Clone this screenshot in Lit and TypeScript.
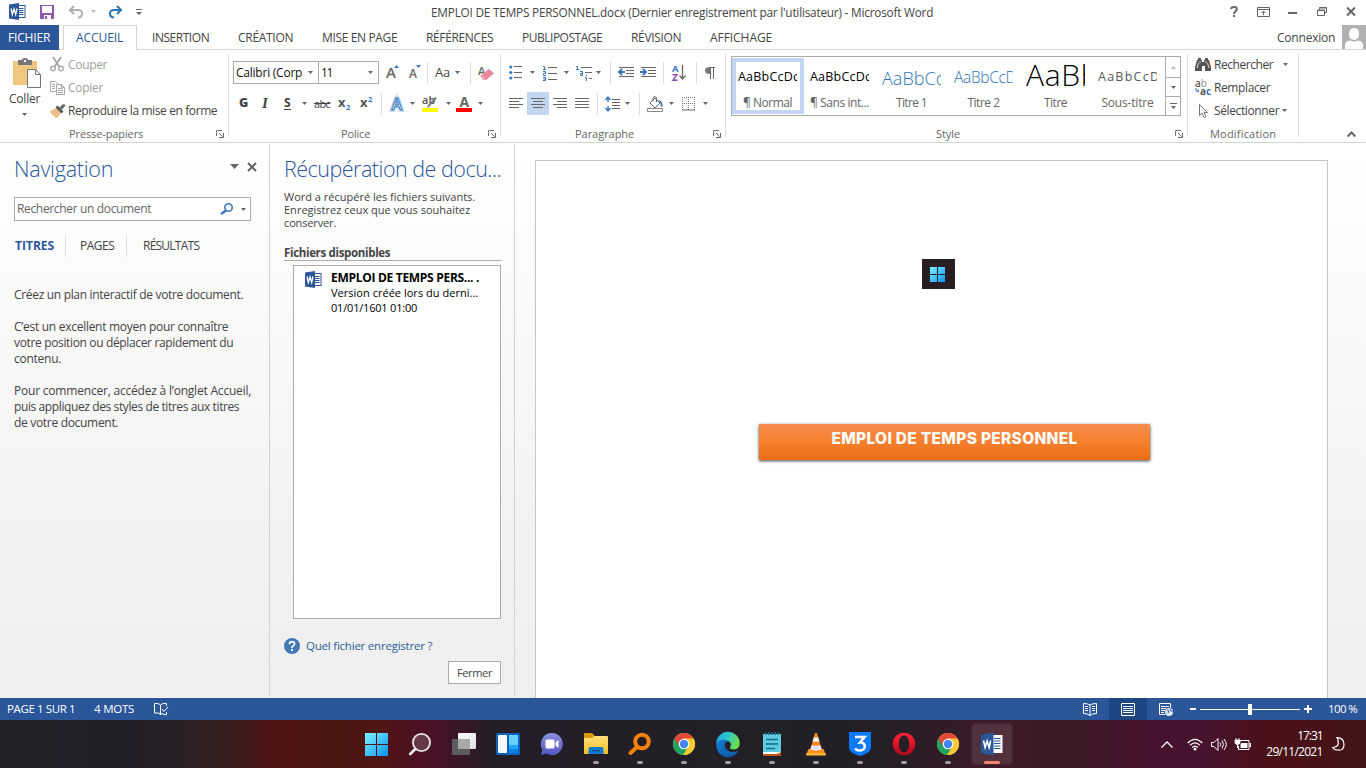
import { LitElement, html, svg, css, unsafeCSS } from "lit";
import { customElement } from "lit/decorators.js";

const FAMILY = '"Open Sans", "Noto Sans", sans-serif';

/* Grid tracks from the left edges of the items; the last number is the end of the row. */
const cols = (...x: number[]) =>
  unsafeCSS(x.slice(1).map((v, i) => `${v - x[i]}px`).join(" "));

const pen = document.createElement("canvas").getContext("2d")!;

/* A label whose tracking is computed so that it takes the given width. */
const t = (text: string, width: number, size = 12, weight = 400, cls = "", family = FAMILY) => {
  pen.font = `${weight} ${size}px ${family}`;
  const spacing = (width + 0.2 - pen.measureText(text).width) / text.length;
  return html`<span class="t ${cls}" style="font-size:${size}px;font-weight:${weight};letter-spacing:${spacing.toFixed(3)}px">${text}</span>`;
};

const ic = (w: number, h: number, body: unknown, cls = "") =>
  html`<svg class="ic ${cls}" width=${w} height=${h} viewBox="0 0 ${w} ${h}" fill="none">${body}</svg>`;

const arrow = () => ic(5, 3, svg`<path d="M0 0h5L2.500 3z" fill="#666"/>`);
const sep = () => html`<i class="sep"></i>`;
const launcher = () =>
  ic(8, 8, svg`<path d="M.5 6V.5H6" stroke="#777"/><path d="M3 3l3.500 3.500M7.500 3v4.500H3" stroke="#666"/>`, "launcher");
const wordIcon = () =>
  ic(17, 17, svg`<rect x="8.500" y="2.500" width="7.500" height="12" fill="#fff" stroke="#2b579a"/>
    <path d="M10 5.500h4.500M10 7.500h4.500M10 9.500h4.500M10 11.500h4.500" stroke="#2b579a"/>
    <path d="M0 1.500L10 0v17L0 15.500z" fill="#2b579a"/>
    <path d="M2 5.500l1.300 6 1.700-5.500 1.700 5.500 1.300-6" stroke="#fff" stroke-width="1.300"/>`);
const binoculars = () =>
  ic(16, 14, svg`<path d="M3 0h3v2h1v2h2V2h1V0h3v2h1l2 7v4h-6V8H7v5H0V9l2-7h1z" fill="#555"/>
    <path d="M3.500 5L2 10M12.500 5l1.500 5M5 3v2M11 3v2" stroke="#ddd"/>`);
const winLogo = (s: number) =>
  ic(s, s, svg`<defs><linearGradient id="w${s}" x1="0" y1="0" x2="${s}" y2="${s}" gradientUnits="userSpaceOnUse"><stop stop-color="#7df3ff"/><stop offset="1" stop-color="#0a93fb"/></linearGradient></defs>
    <path d="M0 0h${(s - 1) / 2}v${(s - 1) / 2}H0zM${(s + 1) / 2} 0H${s}v${(s - 1) / 2}H${(s + 1) / 2}zM0 ${(s + 1) / 2}h${(s - 1) / 2}V${s}H0zM${(s + 1) / 2} ${(s + 1) / 2}H${s}V${s}H${(s + 1) / 2}z" fill="url(#w${s})"/>`);
const lines = (rows: [number, number][], w = 14) =>
  ic(w, 13, svg`${rows.map(([x, l], i) => svg`<path d="M${x} ${i * 3 + 1.5}h${l}" stroke="#666"/>`)}`);

const chrome = () =>
  ic(24, 24, svg`<circle cx="12" cy="12" r="11" fill="#fcc934"/>
    <path d="M12 12L2.500 6.500A11 11 0 0 0 11 23l5.500-8.500z" fill="#1ea362"/>
    <path d="M2.500 6.500A11 11 0 0 1 21.500 6.500H12L7.300 14.500z" fill="#e1483c"/>
    <path d="M12 6.700h9.700A11 11 0 0 1 11.500 23l5-8z" fill="#fcc934"/>
    <circle cx="12" cy="12" r="5.300" fill="#fff"/><circle cx="12" cy="12" r="4.200" fill="#4386f5"/>`);

const TASKS: { icon: () => unknown; run?: boolean; active?: boolean }[] = [
  { icon: () => winLogo(23) },
  {
    icon: () => ic(24, 24, svg`<circle cx="13.500" cy="10.500" r="8.600" fill="#67384a" stroke="#e9e6e8" stroke-width="1.800"/><path d="M7.300 17L2.200 22" stroke="#e9e6e8" stroke-width="2.800" stroke-linecap="round"/>`),
  },
  {
    icon: () => ic(24, 24, svg`<defs><linearGradient id="tv" x2="1" y2="1"><stop stop-color="#fff"/><stop offset="1" stop-color="#dedede"/></linearGradient></defs>
      <rect y="7" width="18" height="16" rx="1" fill="#5d5b5d"/><rect x="6" y="1" width="18" height="16" rx="1" fill="url(#tv)"/><path d="M6 7h12v10H7a1 1 0 0 1-1-1z" fill="#a9a9a9"/>`),
  },
  {
    icon: () => ic(24, 24, svg`<rect y="1" width="24" height="22" rx="1.500" fill="#0d64b8"/><rect x="2" y="3" width="9" height="18" rx="1" fill="#f6f8fa"/><path d="M13 3h9v10h-9z" fill="#66d4ff"/><path d="M13 13h9v4h-9z" fill="#22a4f5"/><path d="M13 17h9v4h-9z" fill="#0a84e4"/>`),
  },
  {
    icon: () => ic(24, 24, svg`<defs><linearGradient id="tm" x2="0" y2="1"><stop stop-color="#8b8fdc"/><stop offset="1" stop-color="#5558c4"/></linearGradient></defs>
      <path d="M12 1a11 11 0 1 1-5.500 20.600L1 23l1.300-5.500A11 11 0 0 1 12 1z" fill="url(#tm)"/><rect x="5.500" y="7.500" width="9" height="9" rx="1.500" fill="#fff"/><path d="M15.500 10.500l3-2.500v8l-3-2.500z" fill="#fff"/>`),
  },
  {
    run: true,
    icon: () => ic(24, 24, svg`<defs><linearGradient id="fo" x2="0" y2="1"><stop stop-color="#ffe07a"/><stop offset="1" stop-color="#f9bf25"/></linearGradient></defs>
      <path d="M0 2a1 1 0 0 1 1-1h7l3 3v4H0z" fill="#d79a0a"/><path d="M0 6h8l2.500-2H23a1 1 0 0 1 1 1v17H0z" fill="url(#fo)"/><path d="M4.500 22v-5a2 2 0 0 1 2-2h11a2 2 0 0 1 2 2v5z" fill="#1279cf"/><path d="M8 18h8v1.500H8z" fill="#0b559b"/>`),
  },
  {
    run: true,
    icon: () => ic(24, 24, svg`<circle cx="14" cy="9.500" r="6.800" stroke="#f98108" stroke-width="4"/><path d="M9 15l-6.500 6" stroke="#f98108" stroke-width="4" stroke-linecap="round"/>`),
  },
  { run: true, icon: chrome },
  {
    run: true,
    icon: () => ic(24, 24, svg`<defs><linearGradient id="e1" x2="1" y2=".3"><stop stop-color="#1f9fdc"/><stop offset=".5" stop-color="#2cc4d2"/><stop offset="1" stop-color="#69df4f"/></linearGradient><linearGradient id="e2" x2="1" y2="1"><stop stop-color="#1580d8"/><stop offset="1" stop-color="#0c4a9c"/></linearGradient></defs>
      <path d="M.3 12A11.700 11.700 0 0 1 23.700 11c.3 4.500-3 6.500-6.200 6.500-3 0-4.200-1.200-3.200-2.700 1.800-2.800-.3-6-4.300-6.300C5.500 8 1.500 9.500.3 12z" fill="url(#e1)"/>
      <path d="M.4 11.500C2.500 7 9 6.500 12.500 9.500 9 9.500 8 12.500 9 15.500c1.800 4.500 8 6 12 3.700.8-.4 1.200.2.700.8A11.700 11.700 0 0 1 .4 11.500z" fill="url(#e2)"/>
      <path d="M8.500 12.500c.5 5 5 8 9.500 7.700 1.500-.1 2.500-.5 3.200-.9.600-.3 1 .2.500.7a11.700 11.700 0 0 1-7 3.700C9 22.500 6.500 17 8.500 12.500z" fill="#1565b3"/>`),
  },
  {
    run: true,
    icon: () => ic(24, 24, svg`<path d="M3 2h18v19H3z" fill="#5fcbe0"/><path d="M5.500 0v3M8.800 0v3M12 0v3M15.200 0v3M18.500 0v3" stroke="#236f86" stroke-width="1.500"/><path d="M6 7.500h12M6 12h12M6 16.500h9" stroke="#176a85" stroke-width="1.600"/><path d="M3 20h18v2H3z" fill="#fff"/><path d="M3 22h14l4-2v4H3z" fill="#b85a1c"/>`),
  },
  {
    run: true,
    icon: () => ic(24, 24, svg`<path d="M4.500 17h15l2.500 6H2z" fill="#f59a16"/><path d="M2.500 21.500h19l.5 2H2z" fill="#ffbd37"/><path d="M11 1h2l5 17.500c-2 2-10 2-12 0z" fill="#f7811a"/><path d="M9.700 5.500h4.600l1.200 4.200H8.500z" fill="#efefef"/><path d="M7.400 13.500h9.200l1.200 4c-2 1.500-9.700 1.500-11.600 0z" fill="#e4e4e4"/>`),
  },
  {
    run: true,
    icon: () => ic(24, 24, svg`<path d="M1 0h22v15c0 5-5 7-11 9C6 22 1 20 1 15z" fill="#0a7bff"/><path d="M7 5h9.500L12 10.500c6-.5 6.500 7.500.5 8-2.500.2-4.500-.8-5.500-2" stroke="#fff" stroke-width="2.600"/>`),
  },
  {
    run: true,
    icon: () => ic(24, 24, svg`<defs><linearGradient id="op" x2="0" y2="1"><stop stop-color="#ff2338"/><stop offset="1" stop-color="#b3071b"/></linearGradient></defs>
      <path fill-rule="evenodd" d="M12 .8a11.200 11.200 0 1 0 0 22.400A11.200 11.200 0 0 0 12 .8zm0 2.800c3.500 0 5.200 4 5.200 8.400s-1.700 8.400-5.200 8.400S6.800 16.400 6.800 12 8.500 3.600 12 3.600z" fill="url(#op)"/>`),
  },
  { run: true, icon: chrome },
  {
    run: true,
    active: true,
    icon: () => ic(24, 24, svg`<rect x="12" y="3" width="10.500" height="18" fill="#fff"/><path d="M14 6.500h6.500M14 9h6.500M14 11.500h6.500M14 14h6.500M14 16.500h6.500" stroke="#2b579a"/><path d="M1 3l12.500-2.500v23L1 21z" fill="#2b579a"/><path d="M3.500 8.500l1.600 7 2-6.500 2 6.500 1.600-7" stroke="#fff" stroke-width="1.600"/>`),
  },
];

@customElement("app-root")
export class AppRoot extends LitElement {
  static styles = css`
    :host { display: block; width: 1366px; height: 768px; overflow: hidden; font-family: ${unsafeCSS(FAMILY)}; color: #444; background: #fff; }
    * { box-sizing: border-box; }
    .app { display: grid; grid-template-rows: 25px 25px 93px 555px 22px 48px; height: 768px; }
    .t { white-space: pre; line-height: 1; display: block; }
    .ic { display: block; overflow: visible; flex: none; }
    .row { display: grid; align-items: center; justify-items: start; }
    .sep { width: 1px; height: 22px; background: #dcdcdc; }
    .title { grid-template-columns: ${cols(0, 9, 40, 68, 91, 108, 136, 431, 1230, 1257, 1288, 1317, 1346, 1366)}; height: 23px; }
    .title > :first-child { grid-column: 2; }
    .title > .t { margin-top: 2px; }
    .tabs { grid-template-columns: ${cols(0, 63, 152, 238, 322, 426, 522, 631, 710, 1277, 1342, 1366)}; background: linear-gradient(#d4d4d4, #d4d4d4) 0 24px / 100% 1px no-repeat; }
    .file { background: #2b579a; color: #fff; width: 59px; height: 25px; padding-left: 8px; display: flex; align-items: center; }
    .tab-on { border: 1px solid #d4d4d4; border-bottom: 0; background: #fff; color: #2b579a; width: 74px; height: 25px; padding-left: 12px; display: flex; align-items: center; }
    .avatar { align-self: start; }

    .ribbon { display: grid; grid-template-columns: ${cols(0, 229, 501, 726, 1188, 1299, 1366)}; border-bottom: 1px solid #d4d4d4; }
    .group { display: grid; grid-template-rows: 11px 23px 8px 23px 11px 15px; background: linear-gradient(#dcdcdc, #dcdcdc) 100% 4px / 1px 83px no-repeat; }
    .group > * { min-width: 0; }
    .r1 { grid-row: 2; } .r2 { grid-row: 4; } .r3 { grid-row: 6; }
    .caption { color: #666; }
    .launcher { margin-top: 1px; margin-left: -1px; }
    .clip { grid-row: 1 / 6; display: grid; grid-template-columns: 50px 1fr; }
    .paste { display: flex; flex-direction: column; padding: 8px 0 0 9px; gap: 5px; }
    .paste svg:first-child { margin-left: 4px; }
    .paste svg:last-child { margin-left: 13px; margin-top: 3px; }
    .stack { display: grid; grid-template-rows: repeat(3, 23px); padding-top: 3px; }
    .stack > div { display: grid; grid-template-columns: 18px auto 1fr; align-items: center; }
    .off { color: #a0a0a0; }
    .cap-clip { grid-template-columns: ${cols(0, 69, 217, 229)}; }
    .cap-clip > :first-child, .cap-font > :first-child, .cap-par > :first-child, .cap-style > :first-child, .cap-mod > :first-child { grid-column: 2; }
    .font1 { grid-template-columns: ${cols(229, 233, 318, 386, 409, 427, 435, 455, 470, 478, 501)}; }
    .font1 > :first-child { grid-column: 2; }
    .box { height: 23px; border: 1px solid #ababab; display: flex; align-items: center; justify-content: space-between; padding: 0 5px 0 2px; color: #111; background: #fff; }
    .bx1 { width: 85px; border-right: 0; } .bx2 { width: 61px; }
    .font2 { grid-template-columns: ${cols(229, 239, 262, 284, 302, 314, 338, 360, 381, 390, 410, 422, 446, 456, 478, 501)}; }
    .font2 > :first-child { grid-column: 2; }
    .u { border-bottom: 1px solid #444; } .it { font-style: italic; font-family: "Liberation Serif", serif; }
    .strike { text-decoration: line-through; }
    .cap-font { grid-template-columns: ${cols(229, 341, 489, 501)}; }
    .par1 { grid-template-columns: ${cols(501, 509, 530, 543, 564, 576, 596, 610, 618, 640, 663, 672, 696, 705, 726)}; }
    .par2 { grid-template-columns: ${cols(501, 509, 527, 553, 575, 597, 605, 625, 639, 647, 669, 682, 703, 726)}; }
    .par1 > :first-child, .par2 > :first-child { grid-column: 2; }
    .on { width: 22px; height: 23px; background: #c2d5f2; display: grid; place-items: center; }
    .cap-par { grid-template-columns: ${cols(501, 575, 714, 726)}; }
    .cap-style { grid-template-columns: ${cols(726, 936, 1176, 1188)}; }
    .gallery { grid-row: 1 / 5; margin: 6px 0 0 5px; width: 450px; height: 60px; border: 1px solid #ababab; display: grid; grid-template-columns: repeat(6, 72px) 16px; }
    .style { display: grid; grid-template-rows: 31px 20px; padding: 5px 0 0 6px; overflow: hidden; }
    .style.sel { margin-top: 1px; height: 56px; border: 4px solid #c2d5f2; padding: 0 0 0 2px; }
    .sample { width: 59px; overflow: hidden; display: flex; align-items: center; color: #000; }
    .style > .t { justify-self: center; align-self: center; margin-left: -7px; color: #666; }
    .style.sel > .t { margin-left: -3px; }
    .sample.blue { color: #2e74b5; } .sample.gray { color: #5a5a5a; }
    .sample.tall { margin-bottom: 6px; }
    .scroll { display: grid; grid-template-rows: 20px 19px 19px; border-left: 1px solid #ababab; margin-left: 1px; }
    .scroll > div { display: grid; place-items: center; } .scroll > div + div { border-top: 1px solid #ababab; }
    .mod { grid-row: 1 / 6; padding: 3px 0 0 7px; }
    .mod > div { grid-template-columns: 19px auto 1fr; }
    .mod > div > svg:last-child { margin-left: 10px; } .mod > div:last-child > svg:last-child { margin-left: 3px; }
    .cap-mod { grid-template-columns: ${cols(1188, 1210, 1299)}; }
    .fold { display: flex; padding: 81px 0 0 48px; }

    .body { display: grid; grid-template-columns: 270px 245px 851px; background: linear-gradient(#fff, #fdfdfd 10%, #f1f1f1 75%, #efefef); }
    .pane { background: linear-gradient(#d4d4d4, #d4d4d4) 100% 2px / 1px 551px no-repeat; padding: 13px 0 0 14px; }
    .h { color: #2b579a; height: 26px; display: grid; align-items: center; }
    .nav-h { grid-template-columns: 216px 17px 1fr; }
    .nav-h svg { margin-top: -5px; }
    .search { width: 237px; height: 24px; border: 1px solid #ababab; background: #fff; margin-top: 15px; display: grid; grid-template-columns: 203px 21px 1fr; align-items: center; padding-left: 2px; color: #666; }
    .navtabs { grid-template-columns: ${cols(15, 65, 80, 126, 143, 240)}; height: 20px; margin-top: 14px; padding-left: 1px; }
    .sel-t { color: #2b579a; }
    .para { display: grid; grid-auto-rows: 16px; align-items: center; margin-top: 16px; }
    .navtabs + .para { margin-top: 32px; }
    .small { display: grid; grid-auto-rows: 13px; margin-top: 8px; align-items: center; }
    .sect { margin-top: 16px; width: 217px; height: 16px; border-bottom: 1px solid #ababab; display: flex; align-items: center; }
    .list { margin: 4px 0 0 9px; width: 208px; height: 354px; border: 1px solid #ababab; background: #fff; display: grid; grid-template-columns: 26px 1fr; padding: 5px 0 0 11px; color: #000; align-items: start; }
    .list > div { display: grid; grid-auto-rows: 14.600px; align-items: center; }
    .help { display: grid; grid-template-columns: 22px 1fr; align-items: center; margin-top: 19px; height: 16px; color: #2b6198; }
    .btn { margin: 7px 0 0 164px; width: 53px; height: 23px; border: 1px solid #ababab; background: #fff; display: grid; place-items: center; }
    .doc { padding: 17px 0 0 20px; }
    .page { width: 793px; height: 538px; border: 1px solid #c6c6c6; border-bottom: 0; background: #fff; }
    .pic { margin: 98px 0 0 386px; width: 33px; height: 30px; background: #281e22; display: grid; place-items: center; }
    .pic svg { margin-right: 2px; }
    .banner { margin: 135px 0 0 223px; width: 391px; height: 36px; background: linear-gradient(#f28c4e, #f6812f 45%, #e86c13); box-shadow: 0 1px 3px rgba(0, 0, 0, .75); color: #fff; display: flex; justify-content: center; padding-top: 7px; }
    .mont { font-family: Inter, sans-serif; }

    .status { background: #2b579a; color: #fff; grid-template-columns: ${cols(0, 7, 94, 154, 1083, 1109, 1159, 1190, 1200, 1304, 1328, 1366)}; }
    .status > :first-child { grid-column: 2; }
    .view-on { background: #1c4784; width: 38px; height: 22px; display: grid; place-items: center; }

    .taskbar { color: #fff; display: grid; grid-template-columns: 353.500px 660px 1fr; background: linear-gradient(90deg, #242027 0, #201f28 9%, #2a1f25 13%, #33201f 16%, #4d1212 20%, #481710 25%, #501414 28%, #471129 32%, #231e27 36%, #222026 62%, #2b1c25 68%, #401a2a 73%, #3b1924 78%, #46112f 84%, #461230 88%, #4b1116 93%, #421418 100%); }
    .tasks { display: grid; grid-template-columns: repeat(15, 44px); }
    .task { width: 40px; height: 40px; margin: 4px 0 0 2.500px; border-radius: 4px; display: grid; grid-template-rows: 36px 4px; justify-items: center; align-items: center; }
    .task.active { background: rgba(255, 255, 255, .1); outline: 1px solid rgba(255, 255, 255, .05); }
    .task .ic { margin-top: 4px; }
    .dot { width: 6px; height: 3px; border-radius: 2px; background: #a09da1; }
    .active .dot { width: 16px; background: #f5846c; }
    .tray { grid-template-columns: ${cols(1014, 1161, 1187, 1211, 1235, 1260, 1332, 1366)}; }
    .tray > :first-child { grid-column: 2; }
    .clock { display: grid; grid-auto-rows: 16px; justify-items: end; align-items: center; width: 63px; }
  `;

  titleBar() {
    return html`<div class="row title">
      ${wordIcon()}
      ${ic(14, 14, svg`<path d="M0 0h14v14H0z" fill="#8a5bb0"/><path d="M2 1h10v7H2zM4 10h7v4H4z" fill="#fff"/><path d="M5 11h2v3H5z" fill="#8a5bb0"/>`)}
      ${ic(16, 14, svg`<path d="M6 1L2 5l4 4M2.500 5H10c6 0 5 7 0 7.500" stroke="#b0b0b0" stroke-width="2"/>`)}
      ${ic(5, 3, svg`<path d="M0 0h5L2.500 3z" fill="#bbb"/>`)}
      ${ic(16, 14, svg`<path d="M9 1l4 4-4 4M12.500 5H6c-6 0-5 7 0 7.500" stroke="#2f75b5" stroke-width="2"/>`)}
      ${ic(6, 6, svg`<path d="M0 .5h6" stroke="#666"/><path d="M0 3h6L3 6z" fill="#666"/>`)}
      ${t("EMPLOI DE TEMPS PERSONNEL.docx (Dernier enregistrement par l'utilisateur) - Microsoft Word", 502, 11.8)}
      ${ic(8, 11, svg`<path d="M1 3Q1.200 1 4 1T6.800 3.200Q6.800 4.500 5.500 5.300T4 8" stroke="#666" stroke-width="2"/><path d="M3 9h2v2H3z" fill="#666"/>`)}
      ${ic(13, 10, svg`<path d="M.5.5h12v9H.5zM.5 2.500h12M6.500 8V4M4.500 6l2-2 2 2" stroke="#666"/>`)}
      ${ic(9, 6, svg`<path d="M0 4h9" stroke="#666" stroke-width="2"/>`)}
      ${ic(10, 9, svg`<path d="M2.500 2.500v-2h7v5h-2M.5 3h7v5.500h-7z" stroke="#666"/><path d="M2 1h8M0 3.500h8" stroke="#666"/>`)}
      ${ic(10, 9, svg`<path d="M1 .5l8 8M9 .5l-8 8" stroke="#666" stroke-width="2"/>`)}
    </div>`;
  }

  tabs() {
    return html`<div class="row tabs">
      <div class="file">${t("FICHIER", 42)}</div>
      <div class="tab-on">${t("ACCUEIL", 47)}</div>
      ${t("INSERTION", 57)} ${t("CRÉATION", 55)} ${t("MISE EN PAGE", 75)} ${t("RÉFÉRENCES", 67)}
      ${t("PUBLIPOSTAGE", 80)} ${t("RÉVISION", 50)} ${t("AFFICHAGE", 62)} ${t("Connexion", 58)}
      ${ic(24, 24, svg`<path d="M0 0h24v24H0z" fill="#b1b1b1"/><rect x="7" y="3" width="10" height="12" rx="5" fill="#fff"/><path d="M3 24v-4q0-4 5-4.500 4 2 8 0 5 .5 5 4.500v4z" fill="#fff"/>`, "avatar")}
    </div>`;
  }

  clipboard() {
    return html`<div class="group">
      <div class="clip">
        <div class="paste">
          ${ic(28, 30, svg`<path d="M0 3h24v24H0z" fill="#edc87e"/><path d="M5 2h4q0-2 3-2t3 2h4v5H5z" fill="#777"/><path d="M11 2h2v2h-2z" fill="#fff"/><path d="M14.500 11.500h8l5 5v13h-13z" fill="#fff" stroke="#777"/><path d="M22.500 11.500v5h5" stroke="#777"/>`)}
          ${t("Coller", 31, 12)} ${arrow()}
        </div>
        <div class="stack">
          <div class="off">${ic(14, 15, svg`<path d="M3 0l6.500 10M11 0L4.500 10" stroke="#a5a5a5" stroke-width="1.800"/><circle cx="3" cy="11.500" r="2.300" stroke="#a5a5a5" stroke-width="1.300"/><circle cx="11" cy="11.500" r="2.300" stroke="#a5a5a5" stroke-width="1.300"/>`)}${t("Couper", 39)}</div>
          <div class="off">${ic(15, 14, svg`<path d="M6 10.500H.5V.5h5l3 3" stroke="#a8a8a8"/><path d="M2 3.500h3M2 5.500h3M2 7.500h3" stroke="#a8a8a8"/><path d="M6.500 3.500h5l3 3v7h-8z" fill="#fff" stroke="#a5a5a5"/><path d="M8 7.500h5M8 9.500h5M8 11.500h5M11.500 3.500v3h3" stroke="#a8a8a8"/>`)}${t("Copier", 35)}</div>
          <div>${ic(16, 14, svg`<path d="M0 7l6-3 5 5-4 5q-2 0-3-2-3-1-4-5z" fill="#edc087"/><path d="M5.500 3.500l2-2 6 6-2 2z" fill="#555"/><path d="M9 4l3.500-3.500q2-1 3 1L12 5.500z" fill="#666"/>`)}${t("Reproduire la mise en forme", 149)}</div>
        </div>
      </div>
      <div class="row r3 cap-clip caption">${t("Presse-papiers", 74, 11)}${launcher()}</div>
    </div>`;
  }

  font() {
    const bigA = (d: string, s: number) => html`${ic(13, 14, svg`<text x="0" y="12" font-size=${s} font-weight="600" fill="#666">A</text><path d=${d} fill="#3a78bd"/>`)}`;
    return html`<div class="group">
      <div class="row r1 font1">
        <div class="box bx1">${t("Calibri (Corp", 66, 12)}${arrow()}</div>
        <div class="box bx2">${t("11", 11, 12)}${arrow()}</div>
        ${bigA("M8 2h5L10.500 -1z", 15)} ${bigA("M7 -1h5L9.500 2z", 12)} ${sep()}
        ${t("Aa", 15, 13)} ${arrow()} ${sep()}
        ${ic(16, 14, svg`<text x="0" y="9" font-size="11" font-weight="600" fill="#666">A</text><path d="M2 10l7-6 1.500 7.500L8 14H5z" fill="#f2a4b2"/><path d="M4 9l7-6 5 4.500-8 6.500z" fill="#e8899b"/>`)}
      </div>
      <div class="row r2 font2">
        ${t("G", 8, 12.5, 800)} ${t("I", 6, 15, 700, "it")} ${t("S", 7, 12, 700, "u")} ${arrow()}
        ${t("abc", 16, 11, 400, "strike")}
        ${ic(13, 14, svg`<text x="0" y="10" font-size="13" font-weight="700" fill="#555">x</text><text x="8" y="13" font-size="7.500" font-weight="700" fill="#3a78bd">2</text>`)}
        ${ic(13, 14, svg`<text x="0" y="10" font-size="13" font-weight="700" fill="#555">x</text><text x="8" y="5" font-size="7.500" font-weight="700" fill="#3a78bd">2</text>`)}
        ${sep()}
        ${ic(14, 14, svg`<text x="1.500" y="12.500" font-size="16" font-weight="600" fill="#fff" stroke="#c3daf2" stroke-width="3.500">A</text><text x="1.500" y="12.500" font-size="16" font-weight="600" fill="#fff" stroke="#3a78bd">A</text>`)}
        ${arrow()}
        ${ic(16, 16, svg`<text x="0" y="8" font-size="11" font-weight="600" fill="#555">ab</text><path d="M15 2l-8 9-2 1 1-3 7-8z" fill="#777"/><path d="M0 12h16v4H0z" fill="#ff0"/>`)}
        ${arrow()}
        ${ic(16, 16, svg`<text x="3.500" y="11" font-size="14" font-weight="700" fill="#666">A</text><path d="M0 12h16v4H0z" fill="red"/>`)}
        ${arrow()}
      </div>
      <div class="row r3 cap-font caption">${t("Police", 29, 11)}${launcher()}</div>
    </div>`;
  }

  paragraph() {
    const arrowCol = "#3a78bd";
    const dots = svg`${[2, 7.5, 13].map((y) => svg`<circle cx="1.800" cy=${y} r="1.600" fill=${arrowCol}/><path d="M5 ${Math.round(y) - 0.5}h8" stroke="#666"/>`)}`;
    const one = svg`<path d="M0 1.500h1.500V5M0 4.500h3" stroke=${arrowCol}/>`;
    const nums = svg`${one}
      <path d="M0 6.500h2.500v2H.5v2H3" stroke=${arrowCol}/><path d="M0 12.500h2.500v3H0M.5 14h2" stroke=${arrowCol}/>
      <path d="M5 2.500h9M5 8.500h9M5 14.500h9" stroke="#666"/>`;
    return html`<div class="group">
      <div class="row r1 par1">
        ${ic(13, 15, dots)} ${arrow()} ${ic(15, 16, nums)} ${arrow()}
        ${ic(16, 16, svg`${one}<path d="M4 6.500h2.500v4h-2v-2h2" stroke=${arrowCol}/><path d="M10.500 10v1M9 12.500h1.500V16" stroke=${arrowCol}/><path d="M5 2.500h11M9 7.500h7M13 13.500h3" stroke="#666"/>`)}
        ${arrow()} ${sep()}
        ${ic(16, 11, svg`<path d="M1 .5h15M8 3.500h8M8 6.500h8M1 9.500h15" stroke="#666"/><path d="M7 5H1M4 2L1 5l3 3" stroke=${arrowCol} stroke-width="2"/>`)}
        ${ic(16, 11, svg`<path d="M1 .5h15M8 3.500h8M8 6.500h8M1 9.500h15" stroke="#666"/><path d="M0 5h6M3 2l3 3-3 3" stroke=${arrowCol} stroke-width="2"/>`)}
        ${sep()}
        ${ic(14, 16, svg`<text y="7" font-size="9.500" font-weight="700" fill=${arrowCol}>A</text><path d="M.5 9.800h4.500L.8 15.300h4.700" stroke="#8a4fae" stroke-width="1.400"/><path d="M10.500 0v13.500M7.500 10.500l3 3.500 3-3.500" stroke="#666" stroke-width="1.300"/>`)}
        ${sep()}
        ${ic(10, 12, svg`<path d="M5 .5h5M5.500 0v12M8.500 0v12" stroke="#666"/><path d="M5 0v7Q0 7 0 3.500T5 0z" fill="#777"/>`)}
      </div>
      <div class="row r2 par2">
        ${lines([[0, 14], [0, 10], [0, 14], [0, 10]])}
        <div class="on">${lines([[0, 14], [2, 10], [0, 14], [2, 10]])}</div>
        ${lines([[0, 14], [4, 10], [0, 14], [4, 10]])}
        ${lines([[0, 14], [0, 14], [0, 14], [0, 14]])}
        ${sep()}
        ${ic(15, 16, svg`<path d="M3 1v5M3 10v5M.5 4L3 1l2.500 3M.5 12L3 15l2.500-3" stroke=${arrowCol} stroke-width="1.400"/><path d="M7 3.500h8M7 6.500h8M7 9.500h8M7 12.500h8" stroke="#666"/>`)}
        ${arrow()} ${sep()}
        ${ic(16, 16, svg`<path d="M3 7l5-5 5 5-5 5z" fill="#fff" stroke="#666"/><path d="M6 5V1.500q2-2 3.500 0V6" stroke="#666"/><path d="M11 4q5 0 4.500 7l-2-1V7z" fill=${arrowCol}/><path d="M.5 12.500h15v3H.5z" fill="#fff" stroke="#888"/>`)}
        ${arrow()}
        ${ic(13, 14, svg`<path d="M.5 0v13M6.500 0v13M12.500 0v13M0 .5h13M0 6.500h13" stroke="#777" stroke-dasharray="1 1"/><path d="M0 13h13" stroke="#666"/>`)}
        ${arrow()}
      </div>
      <div class="row r3 cap-par caption">${t("Paragraphe", 59, 11)}${launcher()}</div>
    </div>`;
  }

  styleGroup() {
    const up = svg`<path d="M0 3h5L2.500 0z" fill="#bbb"/>`;
    return html`<div class="group">
      <div class="gallery">
        <div class="style sel"><div class="sample">${t("AaBbCcDc", 61, 12.5)}</div>${t("¶ Normal", 49, 12)}</div>
        <div class="style"><div class="sample">${t("AaBbCcDc", 61, 12.5)}</div>${t("¶ Sans int...", 59, 12)}</div>
        <div class="style"><div class="sample blue">${t("AaBbCc", 62, 18, 300)}</div>${t("Titre 1", 31, 12)}</div>
        <div class="style"><div class="sample blue">${t("AaBbCcD", 62, 15.5, 300)}</div>${t("Titre 2", 32, 12)}</div>
        <div class="style"><div class="sample tall">${t("AaBb", 73, 30, 300)}</div>${t("Titre", 23, 12)}</div>
        <div class="style"><div class="sample gray">${t("AaBbCcD", 62, 12.5)}</div>${t("Sous-titre", 52, 12)}</div>
        <div class="scroll"><div>${ic(5, 3, up)}</div><div>${arrow()}</div><div>${ic(7, 7, svg`<path d="M0 .5h7" stroke="#666"/><path d="M1 3h5L3.500 6z" fill="#666"/>`)}</div></div>
      </div>
      <div class="row r3 cap-style caption">${t("Style", 24, 11)}${launcher()}</div>
    </div>`;
  }

  editing() {
    return html`<div class="group">
      <div class="stack mod">
        <div>${binoculars()}${t("Rechercher", 59)}${arrow()}</div>
        <div>${ic(16, 16, svg`<text y="6.500" font-size="10" font-weight="600" fill="#555">a<tspan fill="#aaa">b</tspan></text><text x="5" y="14.500" font-size="10" font-weight="700" fill="#555">a<tspan fill="#3a78bd">c</tspan></text><path d="M1 8v3h3M2.500 9.500L4 11l-1.500 1.500" stroke="#3a78bd"/>`)}${t("Remplacer", 56)}</div>
        <div>${ic(16, 16, svg`<path d="M4.500 1.500v11l2.500-2.500 2 4.500 2-1-2-4h3.500z" fill="#fff" stroke="#777"/>`)}${t("Sélectionner", 65)}${arrow()}</div>
      </div>
      <div class="row r3 cap-mod caption">${t("Modification", 66, 11)}</div>
    </div>`;
  }

  panes() {
    return html`<div class="body">
      <div class="pane">
        <div class="h nav-h">${t("Navigation", 99, 21.5, 300)}
          ${ic(9, 5, svg`<path d="M0 0h9L4.500 5z" fill="#666"/>`)}
          ${ic(10, 10, svg`<path d="M1 1l8 8M9 1L1 9" stroke="#666" stroke-width="2"/>`)}</div>
        <div class="search">${t("Rechercher un document", 134)}
          ${ic(13, 12, svg`<circle cx="8.500" cy="4.500" r="3.700" stroke="#3a78bd" stroke-width="1.600"/><path d="M6 7.500L1 11" stroke="#3a78bd" stroke-width="2.500"/>`)}${arrow()}</div>
        <div class="row navtabs">${t("TITRES", 39, 12, 700, "sel-t")}${sep()}${t("PAGES", 34)}${sep()}${t("RÉSULTATS", 56)}</div>
        <div class="para">${t("Créez un plan interactif de votre document.", 229)}</div>
        <div class="para">${t("C’est un excellent moyen pour connaître", 214)}${t("votre position ou déplacer rapidement du", 219)}${t("contenu.", 47)}</div>
        <div class="para">${t("Pour commencer, accédez à l’onglet Accueil,", 237)}${t("puis appliquez des styles de titres aux titres", 225)}${t("de votre document.", 104)}</div>
      </div>
      <div class="pane">
        <div class="h">${t("Récupération de docu...", 217, 21.5, 300)}</div>
        <div class="small">${t("Word a récupéré les fichiers suivants.", 191, 11)}${t("Enregistrez ceux que vous souhaitez", 186, 11)}${t("conserver.", 52, 11)}</div>
        <div class="sect">${t("Fichiers disponibles", 106, 11.5, 700)}</div>
        <div class="list">${wordIcon()}
          <div>${t("EMPLOI DE TEMPS PERS... .", 148, 12, 700)}${t("Version créée lors du derni...", 147, 11)}${t("01/01/1601 01:00", 86, 11)}</div></div>
        <div class="help">${ic(16, 16, svg`<circle cx="8" cy="8" r="8" fill="#4179b5"/><path d="M5.500 6.200Q5.500 3.700 8 3.700T10.500 6Q10.500 7.200 9 8T8 10" stroke="#fff" stroke-width="1.800"/><path d="M7 11h2v2H7z" fill="#fff"/>`)}${t("Quel fichier enregistrer ?", 126, 11.5)}</div>
        <div class="btn">${t("Fermer", 35, 11)}</div>
      </div>
      <div class="doc"><div class="page">
        <div class="pic">${winLogo(15)}</div>
        <div class="banner">${t("EMPLOI DE TEMPS PERSONNEL", 246, 15.5, 800, "mont", "Inter")}</div>
      </div></div>
    </div>`;
  }

  statusBar() {
    return html`<div class="row status">
      ${t("PAGE 1 SUR 1", 68, 11.5)} ${t("4 MOTS", 40, 11.5)}
      ${ic(14, 13, svg`<path d="M6.500 12V2Q5 .5 3 .5H.5V10H4q2 0 2.500 2Q7 10.500 9 10.500M6.500 2Q8 .5 10 .5h2.500V3M8 6l2 2.500L14 4M9 11.500h3.500V9" stroke="#fff"/>`)}
      ${ic(14, 13, svg`<path d="M7 12.500V2Q5 .5.5.5v10Q5 10.500 7 12.500 9 10.500 13.500 10.500V.5Q9 .5 7 2M2 3.500h3M2 5.500h3M2 7.500h3M9 3.500h3M9 5.500h3M9 7.500h3" stroke="#fff"/>`)}
      <div class="view-on">${ic(14, 13, svg`<path d="M.5.5h13v12H.5zM2 3.500h10M2 5.500h10M2 7.500h10M2 9.500h10" stroke="#fff"/>`)}</div>
      ${ic(14, 13, svg`<path d="M6 11.500H.5V.5h11V5M2 3.500h8M2 5.500h5M2 7.500h4M2 9.500h3" stroke="#fff"/><circle cx="10" cy="9" r="4" fill="#dce6f4"/><path d="M8 7l2 1-1 2M11 6l1 2 1.500.5" stroke="#2b579a"/>`)}
      ${ic(6, 2, svg`<path d="M0 0h6v2H0z" fill="#fff"/>`)}
      ${ic(100, 11, svg`<path d="M0 5.500h100" stroke="#fff"/><path d="M48 0h4v11h-4z" fill="#fff"/>`)}
      ${ic(8, 8, svg`<path d="M0 4h8M4 0v8" stroke="#fff" stroke-width="2"/>`)}
      ${t("100 %", 29, 11.5)}
    </div>`;
  }

  taskbar() {
    return html`<div class="taskbar">
      <div></div>
      <div class="tasks">${TASKS.map((k) => html`<div class="task ${k.active ? "active" : ""}">${k.icon()}${k.run ? html`<i class="dot"></i>` : ""}</div>`)}</div>
      <div class="row tray">
        ${ic(12, 7, svg`<path d="M.5 6.500L6 1l5.500 5.500" stroke="#fff" stroke-width="1.300"/>`)}
        ${ic(16, 13, svg`<path d="M.7 5Q8-2.300 15.300 5M3 7.300q5-5 10 0M5.200 9.500q2.800-2.700 5.600 0" stroke="#fff" stroke-width="1.200"/><circle cx="8" cy="11" r="1.500" fill="#fff"/>`)}
        ${ic(16, 13, svg`<path d="M.5 4.500h2.500l4-4v12l-4-4H.5z" stroke="#fff"/><path d="M9 4.500q1.500 2 0 4M11 2.500q3 4 0 8M13 1q4.500 5.500 0 11" stroke="#fff"/>`)}
        ${ic(16, 13, svg`<path d="M5 2.500h9v9H3.500V8" stroke="#fff"/><path d="M6 5h6.500v5H5.500V7zM14.500 5H16v4h-1.500z" fill="#fff"/><path d="M0 2h5v2.500q0 2-2.500 2T0 4.500zM1 0v2M4 0v2" fill="#fff" stroke="#fff" stroke-width=".8"/><path d="M2.500 6v4" stroke="#fff"/>`)}
        <div class="clock">${t("17:31", 25, 12)}${t("29/11/2021", 56, 12)}</div>
        ${ic(13, 14, svg`<path d="M5 .7Q12 1 12 7.500T5.500 13Q2 13 .7 10.500 6 10 6.300 6.500T5 .7z" stroke="#fff" stroke-width="1.200"/>`)}
      </div>
    </div>`;
  }

  render() {
    return html`<div class="app">
      ${this.titleBar()} ${this.tabs()}
      <div class="ribbon">
        ${this.clipboard()} ${this.font()} ${this.paragraph()} ${this.styleGroup()} ${this.editing()}
        <div class="fold">${ic(9, 6, svg`<path d="M.7 5.500l3.800-4 3.800 4" stroke="#666" stroke-width="2"/>`)}</div>
      </div>
      ${this.panes()} ${this.statusBar()} ${this.taskbar()}
    </div>`;
  }
}
